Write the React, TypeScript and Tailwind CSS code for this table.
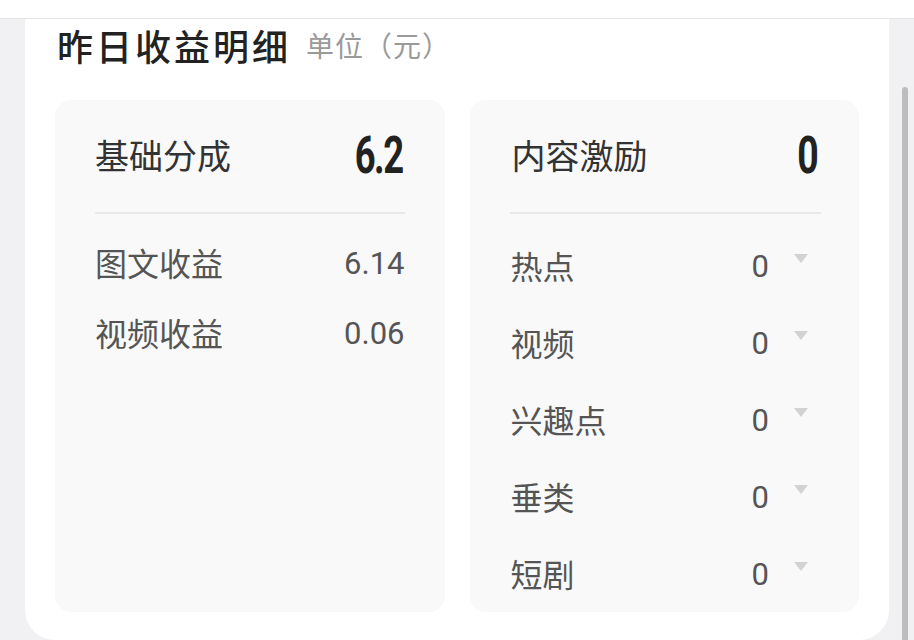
import React from "react";

const cjk = "font-['Noto_Sans_CJK_SC','Noto_Sans',sans-serif]";
const num = "font-['Roboto','Noto_Sans',sans-serif]";
const cond = "font-['Roboto','Noto_Sans',sans-serif]";

function Tri() {
  return (
    <svg width="14" height="9" viewBox="0 0 14 9" className="mb-[17px] ml-[25px] mr-[13px]">
      <path d="M0 0 H14 L7 9 Z" fill="#d2d2d2" />
    </svg>
  );
}

export default function App() {
  const left = [
    ["图文收益", "6.14"],
    ["视频收益", "0.06"],
  ];
  const right = ["热点", "视频", "兴趣点", "垂类", "短剧"];
  return (
    <div className={`w-[914px] h-[640px] bg-[#f1f1f3] overflow-hidden flex flex-col ${cjk}`}>
      <div className="h-[19px] bg-white border-b border-[#e4e4e4] shrink-0" />
      <div className="flex flex-1 min-h-0">
        <div className="w-[25px] shrink-0" />
        <div className="w-[864px] h-[621px] bg-white rounded-b-[30px] px-[30px] flex flex-col">
          <div className="h-[52px] flex items-center pl-[2px]">
            <span className="text-[36px] font-medium text-[#222] leading-none tracking-[3px]">昨日收益明细</span>
            <span className="text-[28px] text-[#9a9a9a] leading-none ml-[15px] tracking-[1px]">单位（元）</span>
          </div>
          <div className="mt-[29px] grid grid-cols-2 gap-[25px]">
            <div className="h-[512px] bg-[#f9f9f9] rounded-[16px] px-[40px]">
              <div className="h-[112px] flex items-center justify-between">
                <span className="text-[34px] text-[#333] leading-none mb-[3px]">基础分成</span>
                <span className={`${cond} font-bold text-[52px] text-[#222] leading-none tracking-[-2px] scale-x-[0.7] origin-right inline-block mr-[2px]`}>6.2</span>
              </div>
              <div className="h-[2px] bg-[#e8e8e8]" />
              <div className="pt-[14px]">
                {left.map(([l, v]) => (
                  <div key={l} className="h-[70px] flex items-center justify-between">
                    <span className="text-[32px] text-[#555] leading-none mb-[3px]">{l}</span>
                    <span className={`${num} text-[31px] text-[#555] leading-none`}>{v}</span>
                  </div>
                ))}
              </div>
            </div>
            <div className="h-[512px] bg-[#f9f9f9] rounded-[16px] pl-[40px] pr-[38px]">
              <div className="h-[112px] flex items-center justify-between">
                <span className="text-[34px] text-[#333] leading-none pl-[2px] mb-[3px]">内容激励</span>
                <span className={`${cond} font-bold text-[52px] text-[#222] leading-none scale-x-[0.72] origin-right inline-block mr-[2px]`}>0</span>
              </div>
              <div className="h-[2px] bg-[#e8e8e8]" />
              <div className="pt-[14px]">
                {right.map((l) => (
                  <div key={l} className="h-[77px] flex items-center justify-between">
                    <span className="text-[32px] text-[#555] leading-none pl-[1px] mb-[4px]">{l}</span>
                    <div className="flex items-center">
                      <span className={`${num} text-[31px] text-[#555] leading-none`}>0</span>
                      <Tri />
                    </div>
                  </div>
                ))}
              </div>
            </div>
          </div>
        </div>
        <div className="w-[25px] shrink-0 pl-[13px] pt-[68px]">
          <div className="w-[6px] h-full bg-[#bdbdbd] rounded-t-[3px]" />
        </div>
      </div>
    </div>
  );
}
